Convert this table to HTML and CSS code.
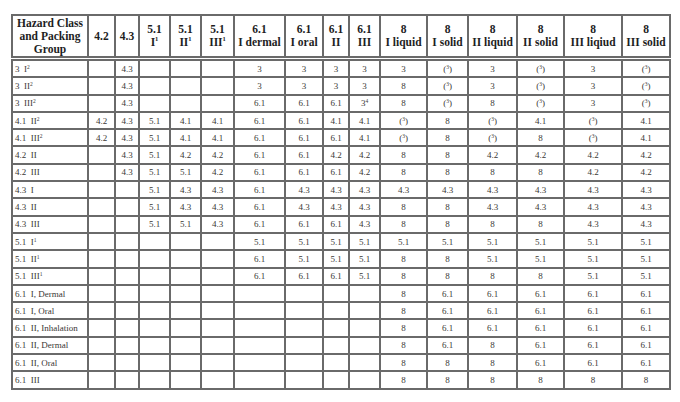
FILE: index.html
```html
<!DOCTYPE html>
<html>
<head>
<meta charset="utf-8">
<link rel="stylesheet" href="styles.css">
</head>
<body>
<div class="page">
<table class="seg">
<colgroup>
<col style="width:76px"><col style="width:27px"><col style="width:24px"><col style="width:31px"><col style="width:31px"><col style="width:33px"><col style="width:51px"><col style="width:38px"><col style="width:26px"><col style="width:31px"><col style="width:47px"><col style="width:41px"><col style="width:49px"><col style="width:47px"><col style="width:58px"><col style="width:48px">
</colgroup>
<thead>
<tr>
<th>Hazard Class<br>and Packing<br>Group</th>
<th>4.2</th>
<th>4.3</th>
<th>5.1<br>I<sup>1</sup></th>
<th>5.1<br>II<sup>1</sup></th>
<th>5.1<br>III<sup>1</sup></th>
<th>6.1<br>I dermal</th>
<th>6.1<br>I oral</th>
<th>6.1<br>II</th>
<th>6.1<br>III</th>
<th>8<br>I liquid</th>
<th>8<br>I solid</th>
<th>8<br>II liquid</th>
<th>8<br>II solid</th>
<th>8<br>III liqiud</th>
<th>8<br>III solid</th>
</tr>
</thead>
<tbody>
<tr><td class="lab">3&nbsp;&nbsp;I<sup>2</sup></td><td></td><td>4.3</td><td></td><td></td><td></td><td>3</td><td>3</td><td>3</td><td>3</td><td>3</td><td>(<sup>3</sup>)</td><td>3</td><td>(<sup>3</sup>)</td><td>3</td><td>(<sup>3</sup>)</td></tr>
<tr><td class="lab">3&nbsp;&nbsp;II<sup>2</sup></td><td></td><td>4.3</td><td></td><td></td><td></td><td>3</td><td>3</td><td>3</td><td>3</td><td>8</td><td>(<sup>3</sup>)</td><td>3</td><td>(<sup>3</sup>)</td><td>3</td><td>(<sup>3</sup>)</td></tr>
<tr><td class="lab">3&nbsp;&nbsp;III<sup>2</sup></td><td></td><td>4.3</td><td></td><td></td><td></td><td>6.1</td><td>6.1</td><td>6.1</td><td>3<sup>4</sup></td><td>8</td><td>(<sup>3</sup>)</td><td>8</td><td>(<sup>3</sup>)</td><td>3</td><td>(<sup>3</sup>)</td></tr>
<tr><td class="lab">4.1&nbsp;&nbsp;II<sup>2</sup></td><td>4.2</td><td>4.3</td><td>5.1</td><td>4.1</td><td>4.1</td><td>6.1</td><td>6.1</td><td>4.1</td><td>4.1</td><td>(<sup>3</sup>)</td><td>8</td><td>(<sup>3</sup>)</td><td>4.1</td><td>(<sup>3</sup>)</td><td>4.1</td></tr>
<tr><td class="lab">4.1&nbsp;&nbsp;III<sup>2</sup></td><td>4.2</td><td>4.3</td><td>5.1</td><td>4.1</td><td>4.1</td><td>6.1</td><td>6.1</td><td>6.1</td><td>4.1</td><td>(<sup>3</sup>)</td><td>8</td><td>(<sup>3</sup>)</td><td>8</td><td>(<sup>3</sup>)</td><td>4.1</td></tr>
<tr><td class="lab">4.2&nbsp;&nbsp;II</td><td></td><td>4.3</td><td>5.1</td><td>4.2</td><td>4.2</td><td>6.1</td><td>6.1</td><td>4.2</td><td>4.2</td><td>8</td><td>8</td><td>4.2</td><td>4.2</td><td>4.2</td><td>4.2</td></tr>
<tr><td class="lab">4.2&nbsp;&nbsp;III</td><td></td><td>4.3</td><td>5.1</td><td>5.1</td><td>4.2</td><td>6.1</td><td>6.1</td><td>6.1</td><td>4.2</td><td>8</td><td>8</td><td>8</td><td>8</td><td>4.2</td><td>4.2</td></tr>
<tr><td class="lab">4.3&nbsp;&nbsp;I</td><td></td><td></td><td>5.1</td><td>4.3</td><td>4.3</td><td>6.1</td><td>4.3</td><td>4.3</td><td>4.3</td><td>4.3</td><td>4.3</td><td>4.3</td><td>4.3</td><td>4.3</td><td>4.3</td></tr>
<tr><td class="lab">4.3&nbsp;&nbsp;II</td><td></td><td></td><td>5.1</td><td>4.3</td><td>4.3</td><td>6.1</td><td>4.3</td><td>4.3</td><td>4.3</td><td>8</td><td>8</td><td>4.3</td><td>4.3</td><td>4.3</td><td>4.3</td></tr>
<tr><td class="lab">4.3&nbsp;&nbsp;III</td><td></td><td></td><td>5.1</td><td>5.1</td><td>4.3</td><td>6.1</td><td>6.1</td><td>6.1</td><td>4.3</td><td>8</td><td>8</td><td>8</td><td>8</td><td>4.3</td><td>4.3</td></tr>
<tr><td class="lab">5.1&nbsp;&nbsp;I<sup>1</sup></td><td></td><td></td><td></td><td></td><td></td><td>5.1</td><td>5.1</td><td>5.1</td><td>5.1</td><td>5.1</td><td>5.1</td><td>5.1</td><td>5.1</td><td>5.1</td><td>5.1</td></tr>
<tr><td class="lab">5.1&nbsp;&nbsp;II<sup>1</sup></td><td></td><td></td><td></td><td></td><td></td><td>6.1</td><td>5.1</td><td>5.1</td><td>5.1</td><td>8</td><td>8</td><td>5.1</td><td>5.1</td><td>5.1</td><td>5.1</td></tr>
<tr><td class="lab">5.1&nbsp;&nbsp;III<sup>1</sup></td><td></td><td></td><td></td><td></td><td></td><td>6.1</td><td>6.1</td><td>6.1</td><td>5.1</td><td>8</td><td>8</td><td>8</td><td>8</td><td>5.1</td><td>5.1</td></tr>
<tr><td class="lab">6.1&nbsp;&nbsp;I, Dermal</td><td></td><td></td><td></td><td></td><td></td><td></td><td></td><td></td><td></td><td>8</td><td>6.1</td><td>6.1</td><td>6.1</td><td>6.1</td><td>6.1</td></tr>
<tr><td class="lab">6.1&nbsp;&nbsp;I, Oral</td><td></td><td></td><td></td><td></td><td></td><td></td><td></td><td></td><td></td><td>8</td><td>6.1</td><td>6.1</td><td>6.1</td><td>6.1</td><td>6.1</td></tr>
<tr><td class="lab">6.1&nbsp;&nbsp;II, Inhalation</td><td></td><td></td><td></td><td></td><td></td><td></td><td></td><td></td><td></td><td>8</td><td>6.1</td><td>6.1</td><td>6.1</td><td>6.1</td><td>6.1</td></tr>
<tr><td class="lab">6.1&nbsp;&nbsp;II, Dermal</td><td></td><td></td><td></td><td></td><td></td><td></td><td></td><td></td><td></td><td>8</td><td>6.1</td><td>8</td><td>6.1</td><td>6.1</td><td>6.1</td></tr>
<tr><td class="lab">6.1&nbsp;&nbsp;II, Oral</td><td></td><td></td><td></td><td></td><td></td><td></td><td></td><td></td><td></td><td>8</td><td>8</td><td>8</td><td>6.1</td><td>6.1</td><td>6.1</td></tr>
<tr><td class="lab">6.1&nbsp;&nbsp;III</td><td></td><td></td><td></td><td></td><td></td><td></td><td></td><td></td><td></td><td>8</td><td>8</td><td>8</td><td>8</td><td>8</td><td>8</td></tr>
</tbody>
</table>
</div>
</body>
</html>
```
FILE: styles.css
```css
html, body {
  margin: 0;
  padding: 0;
  background: #ffffff;
}
.page {
  padding: 14px 11px 0 11px;
}
.seg {
  border-collapse: collapse;
  table-layout: fixed;
  width: 658px;
  font-family: "Liberation Serif", "DejaVu Serif", serif;
  color: #3a3835;
}
.seg th, .seg td {
  border: 2px solid #6a6a6a;
  padding: 0;
  text-align: center;
  vertical-align: middle;
  overflow: hidden;
  white-space: nowrap;
}
.seg th {
  height: 40px;
  font-weight: bold;
  font-size: 11.5px;
  line-height: 13px;
  color: #1e1e1e;
  border-bottom: 5px double #6a6a6a;
}
.seg td {
  height: 15.3px;
  font-size: 9px;
  line-height: 10px;
}
.seg td.lab {
  text-align: left;
  padding-left: 2px;
}
.seg sup {
  font-size: 5.5px;
  line-height: 0;
  vertical-align: 3px;
}
.seg th sup {
  font-size: 6.5px;
  vertical-align: 5px;
}
```
